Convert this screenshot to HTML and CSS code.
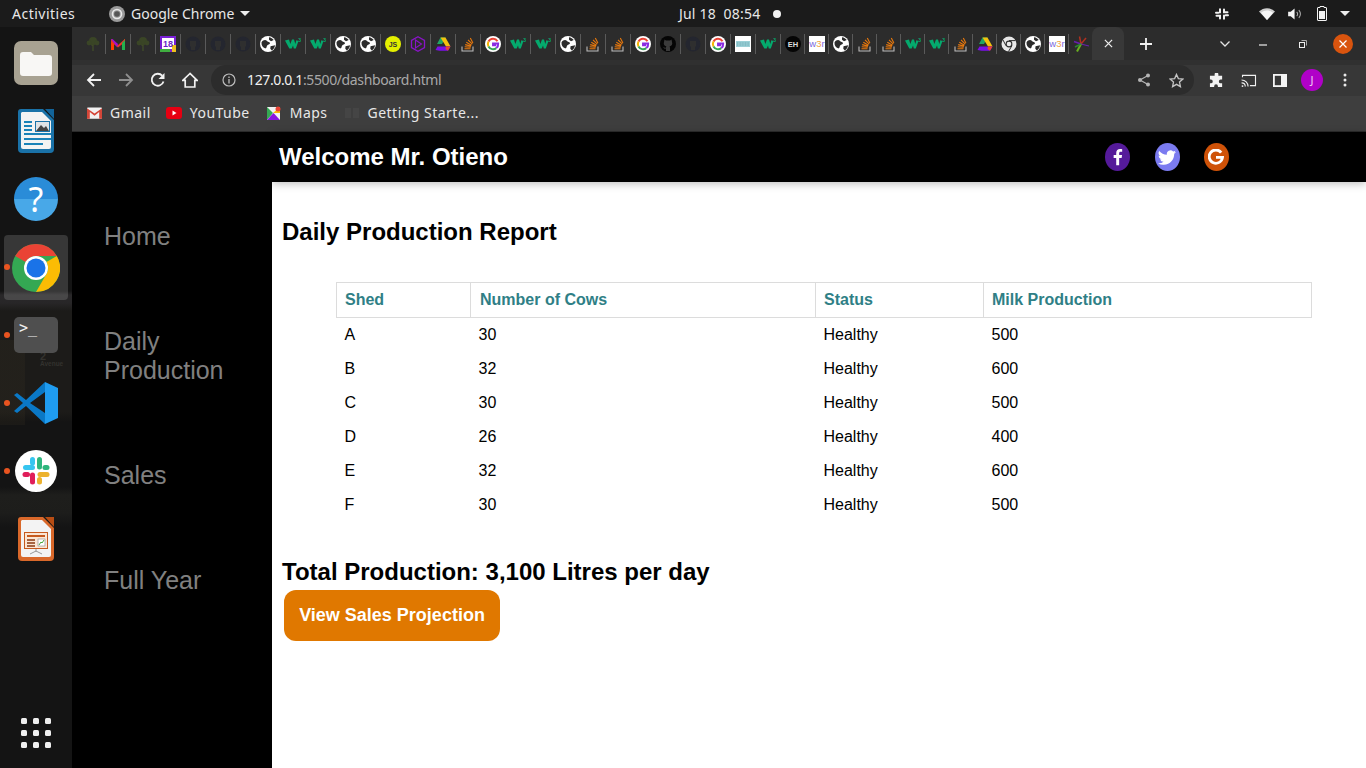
FILE: index.html
```html
<!DOCTYPE html>
<html lang="en">
<head>
<meta charset="utf-8">
<title>Dashboard</title>
<link rel="stylesheet" href="styles.css">
</head>
<body>
<svg class="defs" width="0" height="0" aria-hidden="true">
  <defs>
    <symbol id="tree" viewBox="0 0 16 16"><path d="M8 15V8M8 10 5 7M8 9l3-3" stroke="#3f4a28" stroke-width="1.4" fill="none"/><circle cx="8" cy="5" r="4" fill="#3a4526"/><circle cx="4" cy="7" r="2.4" fill="#3a4526"/><circle cx="12" cy="7" r="2.4" fill="#3a4526"/></symbol>
    <symbol id="gmail" viewBox="0 0 16 16"><path d="M1 3v11h3V7z" fill="#ff3d00"/><path d="M15 3v11h-3V7z" fill="#ffc400"/><path d="M1 3 8 9l7-6v3L8 11.500 1 6z" fill="#e8342a"/><path d="M1 3h1.500L8 8l-1 3z" fill="#a010d0"/><path d="M12 7l3-3v10h-3z" fill="#23b14d"/></symbol>
    <symbol id="cal" viewBox="0 0 16 16"><rect width="16" height="16" fill="#7a1fd6"/><rect x="2" y="2" width="12" height="11" fill="#fff"/><rect y="13" width="10" height="3" fill="#3fae3f"/><rect x="12" y="9" width="4" height="7" fill="#f0c020"/><text x="8" y="11" class="fav-t cal-t">18</text></symbol>
    <symbol id="ghdark" viewBox="0 0 16 16"><circle cx="8" cy="8" r="7.500" fill="#24262f"/><path d="M5 5h6v5l-1 1v3H6v-3L5 10z" fill="#2f2f2f"/></symbol>
    <symbol id="ghblack" viewBox="0 0 16 16"><circle cx="8" cy="8" r="8" fill="#050505"/><path d="M4.500 3.500 6 4.500h4l1.500-1 .5 2.500c.7 2 0 4-2.500 4.500.5.500.5 1 .5 1.500V15H6v-2.500C4 13 3.500 12 3 11c1 .5 1.500 1 3 .7 0-.5 0-1 .5-1.200C4 10 3.300 8 4 6z" fill="#3a3a3a"/></symbol>
    <symbol id="globe" viewBox="0 0 16 16"><circle cx="8" cy="8" r="8" fill="#fff"/><path d="M1.500 6.500C3 3.500 6 3.500 7 5c1 1.200 3 .8 3 2.300 0 1.300-2.500 1-3 2.500-.4 1.200-.5 3-2 2.500C3 11.500 1.200 9.500 1.500 6.500zM9 1.200c2 .3 3.600 1.300 4.700 2.900L11 5.300 9 3.800zM10.500 10.200l4.600-1c-.3 2.200-1.400 4-3.300 5.300l-1.500-1.800z" fill="#2c2c2c"/></symbol>
    <symbol id="w3" viewBox="0 0 16 16"><path d="M0 4.500 4 3.500 5.300 8 7 3.500h2L10.300 8l1-3.800 2.200.8-2.700 7.500H8.800L8 9.500 6.700 12.500H4.300z" fill="#04aa6d"/><text x="14.600" y="5.500" class="fav-t w3-t">3</text></symbol>
    <symbol id="js" viewBox="0 0 16 16"><circle cx="8" cy="8" r="8" fill="#e4f000"/><text x="8" y="10.500" class="fav-t js-t">JS</text></symbol>
    <symbol id="hex" viewBox="0 0 16 16"><path d="M8 .8 14.500 4.500v7L8 15.200 1.500 11.500v-7z" fill="none" stroke="#8a14c8" stroke-width="1.300"/><path d="M5.500 4v8L11.500 8z" fill="none" stroke="#8a14c8" stroke-width="1.100"/></symbol>
    <symbol id="drive" viewBox="0 0 16 16"><path d="M5.500 1.500h5L7 8H2z" fill="#21a464"/><path d="M5.500 1.500h5L15.500 10.500H11z" fill="#f4c20d"/><path d="M2.500 10.500h13L13 14.800H4.500L.5 14z" fill="#7a10e8"/><path d="M11 10.500h4.500L13 14.800 10.500 13z" fill="#ea4335"/></symbol>
    <symbol id="so" viewBox="0 0 16 16"><path d="M2 10.500V15h11v-4.500" fill="none" stroke="#bcbbbb" stroke-width="1.100"/><path d="M4.500 12.800H10.500M4.700 10.800l6 .5M5.200 8.600l5.800 1.500M6.300 6.300l5.200 3M8 3.900l4.300 4.300M10.300 2l2.600 5" stroke="#e8780c" stroke-width="1.100" fill="none"/></symbol>
    <symbol id="goog" viewBox="0 0 16 16"><circle cx="8" cy="8" r="8" fill="#fff"/><path d="M12.500 5.200A5.200 5.200 0 0 0 3.500 5.500" fill="none" stroke="#ea4335" stroke-width="2"/><path d="M3.500 5.500a5.200 5.200 0 0 0 0 5" fill="none" stroke="#f4b400" stroke-width="2"/><path d="M3.500 10.500a5.200 5.200 0 0 0 7.800 1.600" fill="none" stroke="#34a853" stroke-width="2"/><path d="M11.300 12.100a5.200 5.200 0 0 0 1.900-4.600H8v1.800h3.300" fill="none" stroke="#8a2be2" stroke-width="1.900"/></symbol>
    <symbol id="keys" viewBox="0 0 16 16"><rect width="16" height="16" fill="#fff"/><rect x="1" y="5" width="14" height="6" fill="#9cd0d6"/><path d="M2 7h12M2 9h12" stroke="#5a9aa6" stroke-width=".7" stroke-dasharray="1 .6"/></symbol>
    <symbol id="eh" viewBox="0 0 16 16"><circle cx="8" cy="8" r="8" fill="#050505"/><text x="8" y="10.700" class="fav-t eh-t">EH</text></symbol>
    <symbol id="w3r" viewBox="0 0 16 16"><rect width="16" height="16" fill="#fff"/><text x="8" y="11.200" class="fav-t w3r-t">w<tspan class="w3r-3">3</tspan>r</text></symbol>
    <symbol id="chr" viewBox="0 0 16 16"><circle cx="8" cy="8" r="7.500" fill="#e8e8e8"/><circle cx="8" cy="8" r="3.400" fill="#2d2d2d"/><circle cx="8" cy="8" r="2.300" fill="#e8e8e8"/><path d="M8 4.600h6.500M5 9.700 2 4M10.900 9.700 7.500 15.500" stroke="#2d2d2d" stroke-width="1"/></symbol>
    <symbol id="spark" viewBox="0 0 16 16"><path d="M8 8 6.500 .5M8 8l5-6" stroke="#b03020" stroke-width="1.500"/><path d="M8 8 1 5.500" stroke="#6a1fb0" stroke-width="1.500"/><path d="M8 8l8 2" stroke="#6a1fb0" stroke-width="1.200"/><path d="M8 8 4 15.500" stroke="#6ab020" stroke-width="2"/><path d="M8 8 2 11" stroke="#2a8a30" stroke-width="1.500"/></symbol>
  </defs>
</svg>

<div class="screen">
  <header class="topbar">
    <span class="activities">Activities</span>
    <span class="appmenu">
      <svg class="appicon" viewBox="0 0 16 16"><circle cx="8" cy="8" r="8" fill="#9a9a9a"/><circle cx="8" cy="8" r="4.500" fill="none" stroke="#e8e8e8" stroke-width="1.600"/><circle cx="8" cy="8" r="2.800" fill="#555"/></svg>
      Google Chrome
      <i class="caret"></i>
    </span>
    <span class="clock">Jul 18&nbsp; 08:54<i class="clock-dot"></i></span>
    <span class="tray">
      <svg class="tray-slack" viewBox="0 0 14 12"><path d="M5 1.200v3.300M1 4.700h2.300M9 10.800V7.500M13 7.300h-2.300M9 1.500v2.800h3.500M5 10.500V7.700H1.500" stroke="#efefef" stroke-width="2" stroke-linecap="round" fill="none"/></svg>
      <svg class="tray-wifi" viewBox="0 0 16 12"><path d="M0 3.600C4.500-.9 11.500-.9 16 3.600L8 12z" fill="#d0d0d0"/><path d="M2 4.800C5.500 1.800 10.500 1.800 14 4.800L8 12z" fill="#f8f8f8"/></svg>
      <svg class="tray-vol" viewBox="0 0 16 14"><path d="M0 4.500h3L7.500.5v13L3 9.500H0z" fill="#f2f2f2"/><path d="M10 4.500c1.300 1.500 1.300 3.500 0 5M12.500 2.500c2.200 2.700 2.200 6.300 0 9" fill="none" stroke="#aaa" stroke-width="1.200"/></svg>
      <svg class="tray-batt" viewBox="0 0 10 15"><path d="M3 .5h4v1h2a.5.5 0 0 1 .5.500V14a.5.5 0 0 1-.5.5H1a.5.5 0 0 1-.5-.5V2A.5.5 0 0 1 1 1.500h2z" fill="none" stroke="#f2f2f2"/><rect x="2" y="5" width="6" height="8" fill="#f2f2f2"/></svg>
      <i class="caret"></i>
    </span>
  </header>

  <div class="workspace">
    <nav class="dock">
      <div class="slot">
        <svg class="di di-files" viewBox="0 0 44 44"><rect width="44" height="44" rx="7" fill="#a8a292"/><path d="M6 14a3 3 0 0 1 3-3h8l3 3h15a3 3 0 0 1 3 3v15a3 3 0 0 1-3 3H9a3 3 0 0 1-3-3z" fill="#f8f7f5"/></svg>
      </div>
      <div class="slot">
        <svg class="di di-doc" viewBox="0 0 36 44"><path d="M3 0h22l11 11v29a4 4 0 0 1-4 4H4a4 4 0 0 1-4-4V3a3 3 0 0 1 3-3z" fill="#1a72a8"/><path d="M4 3h20l9 9v26a2 2 0 0 1-2 2H5a2 2 0 0 1-2-2V4z" fill="#f3f3f3"/><path d="M27 0l9 0v10z" fill="#12649a"/><path d="M6 13h8M6 17h8M6 21h8M6 25h27M6 30h27M6 35h19" stroke="#1a82b8" stroke-width="2"/><rect x="17" y="12" width="15" height="11" fill="#1a72a8"/><rect x="18" y="13" width="13" height="9" fill="#dfe3e6"/><path d="M18 22l5-6 3 3 2-2 3 5z" fill="#444"/></svg>
      </div>
      <div class="slot">
        <div class="di-help">?</div>
      </div>
      <div class="slot slot-active">
        <i class="run"></i>
        <svg class="di di-chrome" viewBox="0 0 48 48"><circle cx="24" cy="24" r="24" fill="#34a853"/><path d="M24 0a24 24 0 0 1 20.800 12H24a12 12 0 0 0-10.400 6L3.200 12A24 24 0 0 1 24 0z" fill="#ea4335"/><path d="M44.800 12A24 24 0 0 1 24 48l10.400-18a12 12 0 0 0 0-12z" fill="#fbbc04"/><circle cx="24" cy="24" r="12" fill="#fff"/><circle cx="24" cy="24" r="9.500" fill="#1a73e8"/></svg>
      </div>
      <div class="slot">
        <i class="run"></i>
        <div class="di-term"><span class="term-t">&gt;_</span></div>
      </div>
      <div class="slot">
        <i class="run"></i>
        <svg class="di di-code" viewBox="0 0 44 42"><path d="M31 0 44 6v30l-13 6z" fill="#1f9cf0"/><path d="M31 0 12 18 3 11 0 13l9 8-9 8 3 2 9-7 19 18v-11L16 21 31 10z" fill="#0a78c6"/></svg>
      </div>
      <div class="slot">
        <i class="run"></i>
        <svg class="di di-slack" viewBox="0 0 42 42"><circle cx="21" cy="21" r="21" fill="#fff"/><path d="M17.500 9.500V13" stroke="#36c5f0" stroke-width="5" stroke-linecap="round"/><path d="M17.500 17.500h-7" stroke="#36c5f0" stroke-width="5" stroke-linecap="round"/><path d="M24.500 9.500V17" stroke="#2eb67d" stroke-width="5" stroke-linecap="round"/><path d="M32 17.500h-2" stroke="#2eb67d" stroke-width="5" stroke-linecap="round"/><path d="M25 24.500h7" stroke="#ecb22e" stroke-width="5" stroke-linecap="round"/><path d="M24.500 29.500V32" stroke="#ecb22e" stroke-width="5" stroke-linecap="round"/><path d="M17.500 25v7" stroke="#e01e5a" stroke-width="5" stroke-linecap="round"/><path d="M10 24.500h2.500" stroke="#e01e5a" stroke-width="5" stroke-linecap="round"/></svg>
      </div>
      <div class="slot">
        <svg class="di di-doc" viewBox="0 0 36 44"><path d="M3 0h22l11 11v29a4 4 0 0 1-4 4H4a4 4 0 0 1-4-4V3a3 3 0 0 1 3-3z" fill="#d9682a"/><path d="M4 3h20l9 9v26a2 2 0 0 1-2 2H5a2 2 0 0 1-2-2V4z" fill="#f3f3f3"/><path d="M27 0l9 0v10z" fill="#b84d14"/><rect x="6" y="15" width="24" height="17" fill="#c65a1e"/><rect x="7" y="16" width="22" height="15" fill="#fbe6d4"/><path d="M9 19h18" stroke="#c65a1e" stroke-width="2"/><path d="M9 23h8M9 26h8M9 29h8" stroke="#8a3a10" stroke-width="1.500"/><rect x="20" y="22" width="7" height="7" fill="#fff" stroke="#888" stroke-width=".6"/><path d="M21 28l2-3 1 1 2-3" stroke="#4aa83a" fill="none"/><path d="M18 32v3M12 37l6-3 6 3" stroke="#999" fill="none"/></svg>
      </div>
      <div class="slot slot-grid">
        <div class="grid9"><i></i><i></i><i></i><i></i><i></i><i></i><i></i><i></i><i></i></div>
      </div>
      <span class="sign">2<br>Avenue</span>
    </nav>

    <div class="browser">
      <div class="tabstrip">
        <div class="tabs">
          <span class="tab"><svg><use href="#tree"/></svg></span>
          <span class="tab"><svg><use href="#gmail"/></svg></span>
          <span class="tab"><svg><use href="#tree"/></svg></span>
          <span class="tab"><svg><use href="#cal"/></svg></span>
          <span class="tab"><svg><use href="#ghdark"/></svg></span>
          <span class="tab"><svg><use href="#ghdark"/></svg></span>
          <span class="tab"><svg><use href="#ghdark"/></svg></span>
          <span class="tab"><svg><use href="#globe"/></svg></span>
          <span class="tab"><svg><use href="#w3"/></svg></span>
          <span class="tab"><svg><use href="#w3"/></svg></span>
          <span class="tab"><svg><use href="#globe"/></svg></span>
          <span class="tab"><svg><use href="#globe"/></svg></span>
          <span class="tab"><svg><use href="#js"/></svg></span>
          <span class="tab"><svg><use href="#hex"/></svg></span>
          <span class="tab"><svg><use href="#drive"/></svg></span>
          <span class="tab"><svg><use href="#so"/></svg></span>
          <span class="tab"><svg><use href="#goog"/></svg></span>
          <span class="tab"><svg><use href="#w3"/></svg></span>
          <span class="tab"><svg><use href="#w3"/></svg></span>
          <span class="tab"><svg><use href="#globe"/></svg></span>
          <span class="tab"><svg><use href="#so"/></svg></span>
          <span class="tab"><svg><use href="#so"/></svg></span>
          <span class="tab"><svg><use href="#goog"/></svg></span>
          <span class="tab"><svg><use href="#ghblack"/></svg></span>
          <span class="tab"><svg><use href="#ghdark"/></svg></span>
          <span class="tab"><svg><use href="#goog"/></svg></span>
          <span class="tab"><svg><use href="#keys"/></svg></span>
          <span class="tab"><svg><use href="#w3"/></svg></span>
          <span class="tab tab-n"><svg><use href="#eh"/></svg></span>
          <span class="tab tab-n"><svg><use href="#w3r"/></svg></span>
          <span class="tab tab-n"><svg><use href="#globe"/></svg></span>
          <span class="tab tab-n"><svg><use href="#so"/></svg></span>
          <span class="tab tab-n"><svg><use href="#so"/></svg></span>
          <span class="tab tab-n"><svg><use href="#w3"/></svg></span>
          <span class="tab tab-n"><svg><use href="#w3"/></svg></span>
          <span class="tab tab-n"><svg><use href="#so"/></svg></span>
          <span class="tab tab-n"><svg><use href="#drive"/></svg></span>
          <span class="tab tab-n"><svg><use href="#chr"/></svg></span>
          <span class="tab tab-n"><svg><use href="#globe"/></svg></span>
          <span class="tab tab-n"><svg><use href="#w3r"/></svg></span>
          <span class="tab tab-n"><svg><use href="#spark"/></svg></span>
        </div>
        <span class="tab-active">
          <svg class="x-ico" viewBox="0 0 10 10"><path d="M1 1l8 8M9 1 1 9" stroke="#eee" stroke-width="1.400"/></svg>
        </span>
        <svg class="plus" viewBox="0 0 12 12"><path d="M6 0v12M0 6h12" stroke="#f2f2f2" stroke-width="1.800"/></svg>
        <svg class="chev" viewBox="0 0 10 6"><path d="M.5.500 5 5 9.500.500" fill="none" stroke="#e4e4e4" stroke-width="1.300"/></svg>
        <svg class="win-min" viewBox="0 0 8 2"><path d="M0 1h8" stroke="#eee" stroke-width="1.200"/></svg>
        <svg class="win-max" viewBox="0 0 8 8"><path d="M2.500.500h5v5" fill="none" stroke="#aaa"/><rect x=".5" y="2.500" width="5" height="5" fill="none" stroke="#eee"/></svg>
        <span class="win-close"><svg viewBox="0 0 10 10"><path d="M1.500 1.500l7 7M8.500 1.500l-7 7" stroke="#fff" stroke-width="1.200"/></svg></span>
      </div>

      <div class="toolbar">
        <svg class="nav" viewBox="0 0 16 16"><path d="M15 8H2M8 2 2 8l6 6" fill="none" stroke="#f2f2f2" stroke-width="1.800"/></svg>
        <svg class="nav" viewBox="0 0 16 16"><path d="M1 8h13M8 2l6 6-6 6" fill="none" stroke="#8f8f8f" stroke-width="1.800"/></svg>
        <svg class="nav" viewBox="0 0 16 16"><path d="M13.500 9.500A6 6 0 1 1 12.200 3.700" fill="none" stroke="#f2f2f2" stroke-width="1.800"/><path d="M14.500 1v6h-6z" fill="#f2f2f2"/></svg>
        <svg class="nav" viewBox="0 0 16 16"><path d="M8 1.500 .8 8.300h2.400V15h9.600V8.300h2.400z" fill="none" stroke="#f2f2f2" stroke-width="1.700"/></svg>
        <div class="omnibox">
          <svg class="info" viewBox="0 0 14 14"><circle cx="7" cy="7" r="6" fill="none" stroke="#bdbdbd" stroke-width="1.200"/><path d="M7 6v4.500M7 3.500v1.400" stroke="#bdbdbd" stroke-width="1.300"/></svg>
          <span class="url"><b>127.0.0.1</b>:5500/dashboard.html</span>
          <svg class="omni-r share" viewBox="0 0 14 14"><path d="M11 2.500 3 7l8 4.500" fill="none" stroke="#b5b5b5" stroke-width="1.200"/><circle cx="11" cy="2.500" r="2" fill="#b5b5b5"/><circle cx="3" cy="7" r="2" fill="#b5b5b5"/><circle cx="11" cy="11.500" r="2" fill="#b5b5b5"/></svg>
          <svg class="omni-r star" viewBox="0 0 16 16"><path d="M8 1.500l2 4.500 4.800.5-3.600 3.200 1 4.800L8 12.100l-4.200 2.400 1-4.800L1.200 6.500 6 6z" fill="none" stroke="#c4c4c4" stroke-width="1.400"/></svg>
        </div>
        <svg class="tool ext" viewBox="0 0 16 16"><path d="M6 1.500a2 2 0 0 1 4 0V3h4v4h-1.500a2 2 0 0 0 0 4H14v4H9.500v-1a2 2 0 0 0-4 0v1H1v-4h1a2 2 0 0 0 0-4H1V3h5z" fill="#f2f2f2"/></svg>
        <svg class="tool cast" viewBox="0 0 16 14"><path d="M1 3.500V1.500h14v11H9" fill="none" stroke="#f0f0f0" stroke-width="1.200"/><path d="M0 6.500c4 0 7 3 7 7M0 9.500c2.500 0 4 1.500 4 4" fill="none" stroke="#f0f0f0" stroke-width="1.200"/><circle cx="1" cy="13" r="1" fill="#f0f0f0"/></svg>
        <svg class="tool side" viewBox="0 0 14 13"><rect x=".9" y=".9" width="12.200" height="11.200" fill="none" stroke="#f4f4f4" stroke-width="1.800"/><rect x="8" y="1" width="5" height="11" fill="#f4f4f4"/></svg>
        <span class="avatar">J</span>
        <svg class="tool kebab" viewBox="0 0 4 14"><circle cx="2" cy="2" r="1.500" fill="#e8e8e8"/><circle cx="2" cy="7" r="1.500" fill="#e8e8e8"/><circle cx="2" cy="12" r="1.500" fill="#e8e8e8"/></svg>
      </div>

      <div class="bookmarks">
        <span class="bm"><svg viewBox="0 0 16 12"><rect width="16" height="12" rx="1" fill="#f2f2f2"/><path d="M0 1v11h3V5l5 4 5-4v7h3V1L8 6.500z" fill="#d44638"/></svg>Gmail</span>
        <span class="bm"><svg class="bm-yt" viewBox="0 0 16 12"><rect width="16" height="12" rx="3" fill="#e60012"/><path d="M6.500 3.500v5L10.500 6z" fill="#fff"/></svg>YouTube</span>
        <span class="bm"><svg class="bm-maps" viewBox="0 0 14 14"><rect y="1" width="13" height="13" fill="#f2f2f2"/><path d="M0 1l6 6-6 7z" fill="#34a853"/><path d="M0 14l6.500-7 6.500 7z" fill="#8a14e0"/><path d="M6 7l7-6v6z" fill="#fbbc04"/><circle cx="11" cy="3" r="2.500" fill="#ea4335"/></svg>Maps</span>
        <span class="bm bm-gs"><svg class="bm-book" viewBox="0 0 14 12"><path d="M0 1h6v10H0zM8 1h6v10H8z" fill="#454545"/></svg>Getting Starte...</span>
      </div>

      <div class="page">
        <aside class="sidebar">
          <a class="side-link">Home</a>
          <a class="side-link">Daily Production</a>
          <a class="side-link">Sales</a>
          <a class="side-link">Full Year</a>
        </aside>
        <main class="main">
          <div class="header">
            <h1 class="welcome">Welcome Mr. Otieno</h1>
            <div class="socials">
              <span class="soc soc-f"><svg viewBox="0 0 12 18"><path d="M7.800 18V10h2.700l.5-3.200H7.800V4.900c0-.9.400-1.600 1.700-1.600H11.100V.5C10.600.400 9.700.300 8.800.300 6.300.300 4.600 1.800 4.600 4.500v2.300H1.800V10h2.800v8z" fill="#fff"/></svg></span>
              <span class="soc soc-t"><svg viewBox="0 0 20 16"><path d="M20 2a8 8 0 0 1-2.400.6A4 4 0 0 0 19.400.4a8 8 0 0 1-2.600 1A4 4 0 0 0 9.900 5 11.600 11.600 0 0 1 1.400.8a4 4 0 0 0 1.300 5.500 4 4 0 0 1-1.900-.5v.1a4 4 0 0 0 3.300 4 4 4 0 0 1-1.800 0 4 4 0 0 0 3.800 2.800A8.200 8.200 0 0 1 0 14.300 11.600 11.600 0 0 0 6.300 16c7.500 0 11.700-6.200 11.700-11.700v-.5A8 8 0 0 0 20 2z" fill="#fff"/></svg></span>
              <span class="soc soc-g"><svg viewBox="0 0 18 18"><path d="M14.800 4A7.500 7.500 0 1 0 16.300 9.500H9" fill="none" stroke="#fff" stroke-width="3.200"/></svg></span>
            </div>
          </div>
          <div class="content">
            <h2 class="title">Daily Production Report</h2>
            <table class="report">
              <thead>
                <tr><th class="c1">Shed</th><th class="c2">Number of Cows</th><th class="c3">Status</th><th class="c4">Milk Production</th></tr>
              </thead>
              <tbody>
                <tr><td>A</td><td>30</td><td>Healthy</td><td>500</td></tr>
                <tr><td>B</td><td>32</td><td>Healthy</td><td>600</td></tr>
                <tr><td>C</td><td>30</td><td>Healthy</td><td>500</td></tr>
                <tr><td>D</td><td>26</td><td>Healthy</td><td>400</td></tr>
                <tr><td>E</td><td>32</td><td>Healthy</td><td>600</td></tr>
                <tr><td>F</td><td>30</td><td>Healthy</td><td>500</td></tr>
              </tbody>
            </table>
            <h2 class="total">Total Production: 3,100 Litres per day</h2>
            <button class="cta" type="button">View Sales Projection</button>
          </div>
        </main>
      </div>
    </div>
  </div>
</div>
</body>
</html>
```

FILE: styles.css
```css
* { box-sizing: border-box; }
html, body { margin: 0; padding: 0; height: 100%; overflow: hidden; }
body { font-family: "Liberation Sans", Arial, sans-serif; background: #000; }
.defs { position: absolute; }
.fav-t { font-family: "Liberation Sans", sans-serif; font-weight: 700; text-anchor: middle; }
.cal-t { font-size: 9px; fill: #6a1fc6; }
.w3-t { font-size: 5px; fill: #04aa6d; }
.js-t { font-size: 7px; fill: #333; }
.eh-t { font-size: 7.5px; fill: #ddd; }
.w3r-t { font-size: 9.5px; font-weight: 400; fill: #7a6ae0; }
.w3r-3 { fill: #f0a040; }

.screen { width: 1366px; height: 768px; display: flex; flex-direction: column; }

/* GNOME top bar */
.topbar {
  height: 27px; flex: none; background: #1b1b1b; color: #e8e8e8;
  display: flex; align-items: center; position: relative;
  font-family: "Noto Sans", sans-serif; font-size: 14px;
}
.activities { margin-left: 12px; width: 97px; letter-spacing: .5px; }
.appmenu { display: flex; align-items: center; gap: 6px; }
.appicon { width: 16px; height: 16px; }
.caret { display: inline-block; width: 0; height: 0; border: 5px solid transparent; border-top: 5px solid #eee; border-bottom: 0; margin-left: 0; }
.clock { position: absolute; left: 679px; top: 4px; display: flex; align-items: center; font-size: 14px; letter-spacing: .2px; }
.clock-dot { width: 8px; height: 8px; border-radius: 50%; background: #f2f2f2; margin-left: 13px; }
.tray { margin-left: auto; margin-right: 16px; display: flex; align-items: center; }
.tray-slack { width: 14px; height: 12px; margin-right: 30px; }
.tray-wifi { width: 16px; height: 12px; margin-right: 13px; }
.tray-vol { width: 14px; height: 12px; margin-right: 15px; }
.tray-batt { width: 10px; height: 15px; margin-right: 13px; }

.workspace { flex: 1; display: flex; min-height: 0; }

/* Dock */
.dock {
  width: 72px; flex: none; position: relative; display: flex; flex-direction: column; padding: 2px 0 1px;
  background:
    linear-gradient(rgba(70,60,40,.16), rgba(70,60,40,.16)) 0 313px / 25px 85px no-repeat,
    linear-gradient(180deg, rgba(0,0,0,0) 0, rgba(0,0,0,0) 264px, rgba(90,85,90,.3) 268px, rgba(90,85,90,.28) 276px, rgba(60,55,45,.2) 284px, rgba(60,55,45,.2) 385px, rgba(0,0,0,0) 395px, rgba(0,0,0,0) 460px, rgba(70,70,60,.2) 468px, rgba(70,70,60,.18) 486px, rgba(0,0,0,0) 500px),
    #141414;
}
.slot { height: 68px; flex: none; display: flex; align-items: center; justify-content: center; position: relative; z-index: 1; }
.slot-active { width: 64px; margin-left: 4px; height: 65px; margin-top: 2px; margin-bottom: 1px; background: rgba(255,255,255,.15); border-radius: 4px; }
.slot-grid { margin-top: auto; }
.run { position: absolute; left: 4px; top: 31px; width: 6px; height: 6px; border-radius: 50%; background: #e95420; }
.slot-active .run { left: 0; top: 29px; }
.di-files { width: 44px; height: 44px; }
.di-doc { width: 36px; height: 44px; }
.di-help {
  width: 44px; height: 44px; border-radius: 50%; color: #fff; text-align: center;
  background: linear-gradient(180deg, #2a8cd8 0, #2a8cd8 50%, #48a8e8 50%, #48a8e8 100%);
  font: 400 34px/44px "Noto Sans", sans-serif;
}
.di-chrome { width: 48px; height: 48px; }
.di-term { width: 44px; height: 36px; border-radius: 5px; background: #4f4f4f; padding: 2px 5px; }
.term-t { font: 400 15px/15px "DejaVu Sans Mono", monospace; color: #f2f2f2; }
.di-code { width: 44px; height: 42px; }
.di-slack { width: 42px; height: 42px; }
.grid9 { display: grid; grid-template-columns: repeat(3, 6px); gap: 6px; }
.grid9 i { width: 6px; height: 6px; border-radius: 1.500px; background: #eee; display: block; }
.sign {
  position: absolute; left: 40px; top: 326px; color: #33322e; font: 700 6.500px/7px "Liberation Sans", sans-serif;
}
.sign::first-line { font-size: 11px; }

/* Chrome frame */
.browser { flex: 1; min-width: 0; display: flex; flex-direction: column; }
.tabstrip { height: 33px; flex: none; background: #2c2c2c; display: flex; align-items: center; position: relative; }
.tabs { display: flex; align-items: center; margin-left: 9px; width: 1011px; }
.tab { width: 25px; height: 20px; flex: none; border-right: 1px solid #5a5a5a; display: flex; align-items: center; justify-content: center; }
.tab-n { width: 24px; }
.tab:last-child { border-right: 0; }
.tab svg { width: 16px; height: 16px; }
.tab-active {
  width: 32px; height: 33px; flex: none; background: #383838; border-radius: 8px 8px 0 0;
  display: flex; align-items: center; justify-content: center;
}
.x-ico { width: 9px; height: 9px; }
.plus { width: 12px; height: 12px; margin-left: 16px; flex: none; }
.chev { width: 10px; height: 6px; margin-left: 68px; flex: none; }
.win-min { width: 8px; height: 2px; margin-left: 29px; flex: none; margin-top: 3px; }
.win-max { width: 8px; height: 8px; margin-left: 32px; flex: none; }
.win-close { width: 20px; height: 20px; border-radius: 50%; background: #d9540e; margin-left: 26px; flex: none; display: flex; align-items: center; justify-content: center; }
.win-close svg { width: 10px; height: 10px; }

.toolbar { height: 36px; flex: none; background: #373737; border-top: 5px solid #303030; display: flex; align-items: center; padding-bottom: 1px; }
.nav { width: 16px; height: 16px; flex: none; margin-left: 16px; }
.nav:first-child { margin-left: 14px; }
.omnibox {
  width: 983px; height: 30px; flex: none; margin-left: 13px; background: #2c2c2c; border-radius: 15px;
  display: flex; align-items: center; padding-left: 11px;
}
.info { width: 14px; height: 14px; flex: none; }
.url { margin-left: 11px; color: #a8a8a8; font: 400 14px/1 "Noto Sans", sans-serif; letter-spacing: -.38px; }
.url b { color: #f0f0f0; font-weight: 400; }
.omni-r { flex: none; }
.share { width: 14px; height: 14px; margin-left: auto; }
.star { width: 15px; height: 15px; margin-left: 18px; margin-right: 10px; }
.tool { flex: none; }
.ext { width: 15px; height: 15px; margin-left: 15px; }
.cast { width: 16px; height: 13px; margin-left: 17px; }
.side { width: 14px; height: 13px; margin-left: 16px; }
.avatar { width: 22px; height: 22px; flex: none; margin-left: 14px; border-radius: 50%; background: #b000c8; color: #f0d0f5; font: 400 11px/22px "Noto Sans", sans-serif; text-align: center; }
.kebab { width: 4px; height: 14px; margin-left: 20px; }

.bookmarks { height: 36px; flex: none; background: #3e3e3e; border-bottom: 1px solid #2a2a2a; display: flex; align-items: center; padding: 0 0 1px 15px; color: #e8e8e8; font: 400 14px/1 "Noto Sans", sans-serif; letter-spacing: .48px; }
.bm { display: flex; align-items: center; margin-right: 17px; }
.bm:first-child { margin-right: 15px; }
.bm svg { width: 15px; height: 12px; margin-right: 8px; flex: none; }
.bm .bm-yt { width: 16px; }
.bm .bm-maps { width: 14px; height: 14px; margin-right: 9px; }
.bm .bm-book { width: 14px; height: 12px; margin-right: 9px; }

/* Page */
.page { flex: 1; min-height: 0; display: flex; }
.sidebar { width: 200px; flex: none; background: #000; padding: 90px 32px 0; display: flex; flex-direction: column; gap: 76px; }
.side-link { color: #808080; font-size: 25px; line-height: 29px; display: block; }
.main { flex: 1; min-width: 0; background: #fff; }
.header { height: 50px; background: #000; display: flex; align-items: center; padding-left: 7px; box-shadow: 0 2px 8px rgba(0,0,0,.25); position: relative; }
.welcome { margin: 0; color: #fff; font-size: 24px; font-weight: 700; }
.socials { margin-left: 597px; display: flex; gap: 25px; }
.soc { width: 25px; height: 28px; border-radius: 50%; display: flex; align-items: center; justify-content: center; }
.soc-f { background: #551a9a; }
.soc-f svg { width: 11px; height: 18px; }
.soc-t { background: #7b7bf0; }
.soc-t svg { width: 18px; height: 15px; }
.soc-g { background: #cf5208; margin-left: -1px; }
.soc-g svg { width: 16px; height: 16px; }

.content { padding: 36px 54px 0 10px; }
.title { margin: 0 0 37px; font-size: 24px; line-height: 27px; color: #000; }
.report { border-collapse: collapse; width: 975px; margin-left: 54px; table-layout: fixed; font-size: 16px; color: #000; }
.report th { height: 35px; padding: 0 8px; text-align: left; color: #2f7f86; font-weight: 700; border: 1px solid #dcdcdc; }
.report td { height: 34px; padding: 0 8px; }
.report .c2 { padding-left: 9px; }
.c1 { width: 134px; }
.c2 { width: 345px; }
.c3 { width: 168px; }
.c4 { width: 328px; }
.total { margin: 36px 0 5px; font-size: 24px; line-height: 27px; color: #000; }
.cta {
  display: block; width: 216px; height: 51px; margin-left: 2px; border: 0; border-radius: 12px;
  background: #e07800; color: #fff; font: 700 18px "Liberation Sans", sans-serif;
}
```
